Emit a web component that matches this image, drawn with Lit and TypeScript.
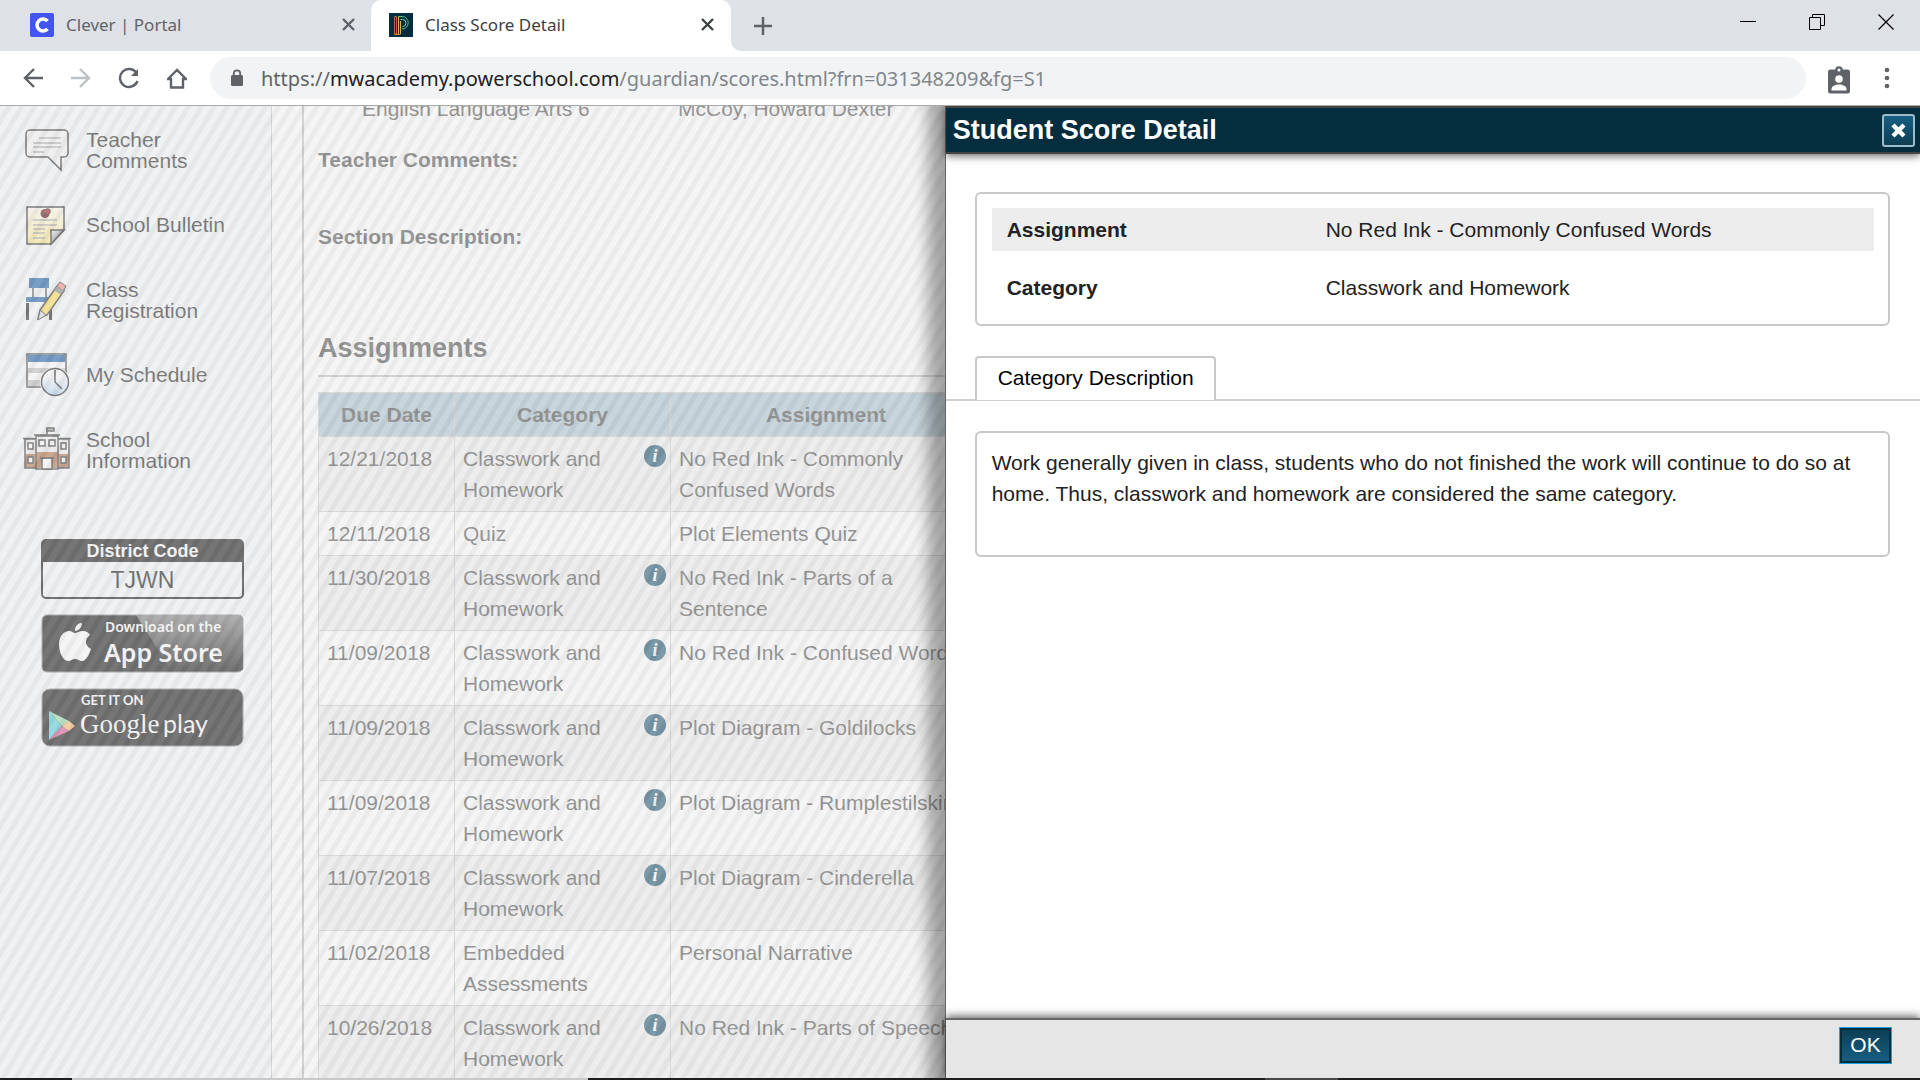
import { LitElement, html, css, svg, nothing } from "lit";
import { customElement, property } from "lit/decorators.js";

type Row = { date: string; category: string; info: boolean; name: string };

const CW = "Classwork and Homework";

const ROWS: Row[] = [
  { date: "12/21/2018", category: CW, info: true, name: "No Red Ink - Commonly Confused Words" },
  { date: "12/11/2018", category: "Quiz", info: false, name: "Plot Elements Quiz" },
  { date: "11/30/2018", category: CW, info: true, name: "No Red Ink - Parts of a Sentence" },
  { date: "11/09/2018", category: CW, info: true, name: "No Red Ink - Confused Words" },
  { date: "11/09/2018", category: CW, info: true, name: "Plot Diagram - Goldilocks" },
  { date: "11/09/2018", category: CW, info: true, name: "Plot Diagram - Rumplestilskin" },
  { date: "11/07/2018", category: CW, info: true, name: "Plot Diagram - Cinderella" },
  { date: "11/02/2018", category: "Embedded Assessments", info: false, name: "Personal Narrative" },
  { date: "10/26/2018", category: CW, info: true, name: "No Red Ink - Parts of Speech" },
];

const ICONS: Record<string, unknown> = {
  comments: svg`
    <path d="M6 3h34a4 4 0 0 1 4 4v19a4 4 0 0 1-4 4h-3v13L24 30H6a4 4 0 0 1-4-4V7a4 4 0 0 1 4-4z" fill="#f6f6f6" stroke="#111" stroke-width="1.5"/>
    <g stroke="#999" stroke-width="1.5"><path d="M15 11h22M9 16h28M9 20h28M9 25h11"/></g>`,
  bulletin: svg`
    <defs><linearGradient id="note" x1="0" y1="0" x2="0" y2="1"><stop offset="0" stop-color="#fffdf0"/><stop offset="1" stop-color="#ffe680"/></linearGradient>
    <linearGradient id="curl" x1="0" y1="0" x2="1" y2="1"><stop offset="0" stop-color="#fff"/><stop offset=".6" stop-color="#666"/></linearGradient></defs>
    <path d="M3 5h37v23L27 42H3z" fill="url(#note)" stroke="#111" stroke-width="1.5"/>
    <path d="M40 28 27 42V28z" fill="url(#curl)" stroke="#111" stroke-width="1.5"/>
    <g stroke="#999" stroke-width="1.5"><path d="M9 18h24M9 23h24M9 27h12M9 31h12M9 36h12"/></g>
    <ellipse cx="21" cy="11.500" rx="4.500" ry="4.500" fill="#400"/><circle cx="23.500" cy="9.500" r="2.800" fill="#b00" stroke="#222"/>`,
  registration: svg`
    <path d="M5 1h20v10H5z" fill="#0652a0"/><path d="M9 11v9M22 11v9" stroke="#222" stroke-width="1.500"/>
    <path d="M2 20h26v5H2z" fill="#0652a0"/><path d="M2 26h3v17H2zM25 30h3v13h-3z" fill="#111"/>
    <path d="m14 42 2-9L33 9l7 5-17 24z" fill="#ffd840" stroke="#222" stroke-width="1.500"/>
    <path d="m33 9 3-4 6 4-2.500 5z" fill="#ff7878" stroke="#222"/><path d="m30 13 3-4 7 5-3 4z" fill="#777"/>
    <path d="m16 33 6 5-8 5z" fill="#ddd" stroke="#222"/>`,
  schedule: svg`
    <defs><linearGradient id="face" x1="0" y1="0" x2="0" y2="1"><stop offset=".3" stop-color="#fff"/><stop offset="1" stop-color="#a8ccf4"/></linearGradient></defs>
    <path d="M3 2h39v33H3z" fill="#fff" stroke="#222" stroke-width="1.500"/>
    <path d="M4 3h37v7H4z" fill="#0652a0"/><path d="M4 16h37v5H4zM4 28h37v6H4z" fill="#bbb"/>
    <circle cx="31" cy="30" r="15" fill="#fff"/>
    <circle cx="31" cy="30" r="13.500" fill="url(#face)" stroke="#111" stroke-width="1.500"/><path d="M31 18v12l7 7" fill="none" stroke="#111" stroke-width="1.500"/>`,
  school: svg`
    <path d="M1 12h44v29H1z" fill="#eee"/><path d="M1 27h12v14H1zM12 25h22v16H12zM34 27h11v14H34z" fill="#a86438"/>
    <g fill="none" stroke="#222" stroke-width="1.500"><path d="M12 9h22v33H12zM1 12h11v29H1zM34 12h11v29H34zM10 8h26M-1 11.500h12M35 11.500h12M23 8V1"/><path d="M23 1h7v3h-7z" fill="#999"/></g>
    <g fill="#fff" stroke="#222" stroke-width="1.500"><path d="M4 16h5v6H4zM15 13h6v6h-6zM25 13h6v6h-6zM37 16h5v6h-5zM4 30h5v6H4zM37 30h5v6h-5zM18 31h10v11H18z"/><path d="M16 31h14"/></g>`,
};

@customElement("browser-chrome")
class BrowserChrome extends LitElement {
  static styles = css`
    :host { display: block; font-family: "Noto Sans", "Open Sans", sans-serif; color: #5f6368; }
    .strip { display: flex; height: 51px; background: #dee1e6; align-items: stretch; }
    .tab { box-sizing: border-box; display: flex; align-items: center; gap: 12px; font-size: 17px; padding: 0 11px 2px 30px; width: 371px; }
    .tab.active { width: 360px; background: #fff; border-radius: 10px 10px 0 0; color: #3c4043; padding: 0 12px 2px 18px; }
    .tab span { flex: 1; }
    .corner { width: 10px; background: #fff; }
    .corner i { display: block; height: 100%; background: #dee1e6; border-bottom-left-radius: 10px; }
    button { display: grid; place-items: center; border: 0; padding: 0; background: none; color: inherit; width: 24px; height: 24px; }
    svg { display: block; }
    .plus { align-self: center; margin-left: 10px; }
    .window { margin-left: auto; display: flex; gap: 45px; padding: 10px 22px 0 0; color: #000; }
    .bar { display: flex; align-items: center; height: 55px; background: #fff; border-bottom: 1px solid #aaa; box-sizing: border-box; padding: 0 21px; gap: 24px; }
    .omni { flex: 1; display: flex; align-items: center; gap: 17px; height: 42px; border-radius: 21px; background: #f1f3f4; padding: 0 20px; margin: 0 -3px; }
    .url { font-size: 20px; color: #80868b; white-space: nowrap; }
    .url b { font-weight: 400; color: #202124; }
    .url i { font-style: normal; color: #5f6368; }
  `;
  render() {
    const x = html`<svg width="13" height="13" viewBox="0 0 13 13" stroke="currentColor" stroke-width="2.400"><path d="m1 1 11 11M12 1 1 12"/></svg>`;
    return html`
      <div class="strip">
        <div class="tab">
          <svg width="24" height="24" viewBox="0 0 24 24"><rect width="24" height="24" rx="2" fill="#4255f2"/><path d="M17.500 8A6 6 0 1 0 17.500 16" fill="none" stroke="#fff" stroke-width="3.500"/></svg>
          <span>Clever | Portal</span><button aria-label="Close tab">${x}</button>
        </div>
        <div class="tab active">
          <svg width="24" height="24" viewBox="0 0 24 24" fill="none"><rect width="24" height="24" fill="#042d3e"/><path d="M5.500 21V3.500h2V21z" stroke="#c75a5a"/><path d="M9.500 21V3.500M11.500 21V8" stroke="#d8b34a"/><path d="M9 3.500h4a6 6 0 0 1 0 12.500" stroke="#58b889"/><path d="M11.500 6.500h2a3.500 3.500 0 0 1 0 7" stroke="#78c8a8"/><path d="M5.500 21.500h6" stroke="#d8843a"/></svg>
          <span>Class Score Detail</span><button aria-label="Close tab">${x}</button>
        </div>
        <div class="corner"><i></i></div>
        <button class="plus" aria-label="New tab"><svg width="18" height="18" viewBox="0 0 18 18" stroke="currentColor" stroke-width="2.500"><path d="M9 0v18M0 9h18"/></svg></button>
        <div class="window">
          <button aria-label="Minimize"><svg width="16" height="16" stroke="currentColor"><path d="M0 7.500h16"/></svg></button>
          <button aria-label="Restore"><svg width="16" height="16" fill="none" stroke="currentColor"><path d="M.5 3.500h11v12H.5zM3.500 3.500v-3h12v11h-4"/></svg></button>
          <button aria-label="Close"><svg width="16" height="16" stroke="currentColor" stroke-width="1.200"><path d="m.5.5 15 15M15.500.5l-15 15"/></svg></button>
        </div>
      </div>
      <div class="bar">
        <button aria-label="Back"><svg width="20" height="20" fill="none" stroke="currentColor" stroke-width="2.400"><path d="M20 10H2M11 1l-9 9 9 9"/></svg></button>
        <button aria-label="Forward"><svg width="20" height="20" fill="none" stroke="#bdc1c6" stroke-width="2.400"><path d="M0 10h18M9 1l9 9-9 9"/></svg></button>
        <button aria-label="Reload"><svg width="22" height="22" fill="none" stroke="currentColor" stroke-width="2.400"><path d="M18.500 6A9 9 0 1 0 19.500 14"/><path d="M20 2v7h-7z" fill="currentColor" stroke="none"/></svg></button>
        <button aria-label="Home"><svg width="20" height="21" fill="none" stroke="currentColor" stroke-width="2.400"><path d="M1 11 10 2l9 9h-3v8.500H4V11z"/></svg></button>
        <div class="omni">
          <svg width="14" height="18" viewBox="0 0 14 18"><rect x="1" y="6" width="12" height="11" rx="1.500" fill="#5f6368"/><path d="M3.800 7V4.500a3.200 3.200 0 0 1 6.400 0V7" fill="none" stroke="#5f6368" stroke-width="1.800"/></svg>
          <div class="url"><i>https://</i><b>mwacademy.powerschool.com</b>/guardian/scores.html?frn=031348209&amp;fg=S1</div>
        </div>
        <button aria-label="Profile"><svg width="24" height="28" viewBox="0 0 24 28"><rect x="1" y="3.500" width="22" height="24" rx="2.500" fill="#5f6368"/><circle cx="12" cy="4" r="3.800" fill="#5f6368"/><circle cx="12" cy="4" r="1.500" fill="#fff"/><circle cx="12" cy="13" r="3.800" fill="#fff"/><path d="M4.500 24.500v-1.500c0-3 4-4.500 7.500-4.500s7.500 1.500 7.500 4.500v1.500z" fill="#fff"/></svg></button>
        <button aria-label="Menu"><svg width="6" height="22" fill="currentColor"><circle cx="3" cy="3" r="2.300"/><circle cx="3" cy="11" r="2.300"/><circle cx="3" cy="19" r="2.300"/></svg></button>
      </div>`;
  }
}

@customElement("side-nav")
class SideNav extends LitElement {
  static styles = css`
    :host { display: block; box-sizing: border-box; width: 272px; background: #f4f8fc; border-right: 1px solid #c0c4c8; padding-top: 6px; }
    a { display: flex; align-items: center; height: 75px; padding-left: 24px; gap: 16px; color: #111; text-decoration: none; font-size: 21px; line-height: 21px; }
    a svg { flex: none; overflow: visible; }
    a span { width: 140px; }
    .promo { display: flex; flex-direction: column; gap: 15px; padding: 52px 27px 0 41px; }
    .code { border: 2px solid #000; border-radius: 5px; text-align: center; height: 56px; }
    .code b { display: block; background: #000; color: #fff; font-size: 18px; line-height: 21px; }
    .code span { font-size: 23px; line-height: 36px; }
    .promo a { display: block; height: auto; padding: 0; }
    .promo svg { display: block; width: 100%; height: 59px; }
  `;
  render() {
    const item = (icon: string, label: string) => html`<a href="#${icon}"><svg width="46" height="46" viewBox="0 0 46 46">${ICONS[icon]}</svg><span>${label}</span></a>`;
    return html`
      <nav>
        ${item("comments", "Teacher Comments")}${item("bulletin", "School Bulletin")}
        ${item("registration", "Class Registration")}${item("schedule", "My Schedule")}${item("school", "School Information")}
      </nav>
      <div class="promo">
        <div class="code"><b>District Code</b><span>TJWN</span></div>
        <a href="#ios"><svg viewBox="0 0 203 59">
          <defs><linearGradient id="sheen" x1="0" y1="0" x2="0" y2="1"><stop offset="0" stop-color="#777"/><stop offset="1" stop-color="#000"/></linearGradient></defs>
          <rect x="1" y="1" width="201" height="57" rx="5" fill="#000" stroke="#777"/>
          <path d="M95 1h102a5 5 0 0 1 5 5v50h-72z" fill="url(#sheen)"/>
          <path d="M41 9c0 5-4 8-7 8 0-5 3-8 7-8zM34 19c2 0 4-2 8-2 3 0 5 1 7 4-6 4-5 11 1 14-2 6-5 12-9 12-3 0-4-2-7-2s-4 2-7 2c-5 0-9-9-9-17 0-8 5-13 10-13 3 0 4 2 6 2z" fill="#fff"/>
          <text x="64" y="18" font-family="Noto Sans, sans-serif" font-weight="600" font-size="14" fill="#fff">Download on the</text>
          <text x="63" y="48" font-family="Noto Sans, sans-serif" font-weight="600" font-size="25" fill="#fff">App Store</text>
        </svg></a>
        <a href="#android"><svg viewBox="0 0 203 59">
          <rect x="1" y="1" width="201" height="57" rx="8" fill="#000" stroke="#777"/>
          <path d="M8 23v29l13-14z" fill="#48c8d8"/><path d="m8 23 20 10-7 5z" fill="#90e0a0"/><path d="m8 52 20-9-7-5z" fill="#d84888"/><path d="m28 33 6 5-6 5-7-5z" fill="#ffb060"/>
          <text x="40" y="17" font-family="Lato, sans-serif" font-weight="700" font-size="13" fill="#fff">GET IT ON</text>
          <text x="39" y="45" font-family="Liberation Serif, serif" font-size="27" fill="#fff">Google</text>
          <text x="122" y="45" font-family="Lato, sans-serif" font-size="25" fill="#fff">play</text>
        </svg></a>
      </div>`;
  }
}

@customElement("assignment-list")
class AssignmentList extends LitElement {
  @property({ attribute: false }) rows: Row[] = [];
  static styles = css`
    :host { display: block; color: #444; font-size: 21px; line-height: 31px; border-left: 2px solid #bcbcbc; padding-left: 14px; }
    .course { display: flex; align-items: flex-end; height: 18px; padding-left: 44px; }
    .course span { flex: 0 0 316px; }
    h3 { font-size: 21px; line-height: 31px; margin: 0; }
    .first { margin: 20px 0 46px; }
    h2 { font-size: 27px; line-height: 36px; margin: 78px 0 15px; padding-bottom: 9px; border-bottom: 2px solid #c0c0c0; }
    table { border-collapse: collapse; table-layout: fixed; width: 663px; }
    th, td { box-sizing: border-box; border: 1px solid #cacaca; padding: 6px 4px 6px 8px; text-align: left; vertical-align: top; }
    th { background: #a6c0ce; text-align: center; padding: 6px; }
    .date { width: 136px; }
    .cat { width: 216px; }
    .name { width: 311px; }
    tbody tr:nth-child(odd) { background: #f0f0f0; }
    .cell { display: flex; justify-content: space-between; }
    .info { flex: none; width: 22px; height: 22px; margin: 2px 0 0; border: 0; padding: 0; border-radius: 50%; background: #0a4664; color: #fff; font: italic bold 18px/22px "Liberation Serif", serif; }
  `;
  render() {
    return html`
      <div class="course"><span>English Language Arts 6</span><span>McCoy, Howard Dexter</span></div>
      <h3 class="first">Teacher Comments:</h3>
      <h3>Section Description:</h3>
      <h2>Assignments</h2>
      <table>
        <thead><tr><th class="date">Due Date</th><th class="cat">Category</th><th class="name">Assignment</th></tr></thead>
        <tbody>${this.rows.map((r) => html`<tr><td>${r.date}</td>
          <td><div class="cell"><span>${r.category}</span>${r.info ? html`<button class="info">i</button>` : nothing}</div></td>
          <td>${r.name}</td></tr>`)}</tbody>
      </table>`;
  }
}

@customElement("score-dialog")
class ScoreDialog extends LitElement {
  static styles = css`
    :host { display: flex; flex-direction: column; box-sizing: border-box; background: #fff; border-left: 1px solid #666; color: #222; font-size: 21px; line-height: 31px; box-shadow: 0 6px 14px 17px rgba(0, 0, 0, 0.33); }
    header { display: flex; justify-content: space-between; align-items: center; height: 44px; background: #042d3e; border: solid #444; border-width: 2px 0; padding: 0 5px 0 7px; box-shadow: 0 2px 8px rgba(0, 0, 0, 0.6); }
    h1 { margin: 0; color: #fff; font-size: 27px; line-height: 40px; }
    .close { box-sizing: border-box; width: 33px; height: 33px; display: grid; place-items: center; padding: 0; border: 2px solid #9cbccb; border-radius: 3px; background: linear-gradient(#176084, #0d3d52); }
    main { flex: 1; padding-top: 38px; }
    .card { border: 2px solid #c8c8c8; border-radius: 6px; margin: 0 30px 0 29px; padding: 14px 14px 14px 15px; }
    .facts { height: 102px; }
    dl { margin: 0; display: grid; gap: 15px; }
    dl div { display: flex; padding: 6px 15px; background: #fff; }
    dl .shade { background: #ededed; }
    dt { width: 319px; font-weight: 700; }
    dd { margin: 0; }
    .tabs { display: flex; margin: 30px 0; padding-left: 29px; border-bottom: 2px solid #d0d0d0; }
    .tab { font: inherit; color: #000; background: #fff; border: 2px solid #c8c8c8; border-bottom: 0; border-radius: 4px 4px 0 0; padding: 3px 20px 7px 21px; margin-bottom: -1px; height: 44px; }
    .desc p { margin: 0 0 32px; }
    footer { display: flex; justify-content: flex-end; align-items: flex-start; height: 60px; box-sizing: border-box; padding: 7px 28px 0 0; background: #e6e6e6; border-top: 2px solid #666; box-shadow: 0 -2px 8px rgba(0, 0, 0, 0.6); }
    .ok { box-sizing: border-box; width: 53px; height: 37px; padding: 0 0 2px; border: 1px solid #1ba1e2; box-shadow: inset 0 0 0 2px #042d3e; background: linear-gradient(#0d3d52, #176084); color: #fff; font: inherit; }
  `;
  render() {
    return html`
      <header><h1>Student Score Detail</h1>
        <button class="close" aria-label="Close"><svg width="15" height="15" stroke="#fff" stroke-width="4.500"><path d="m2 2 11 11M13 2 2 13"/></svg></button></header>
      <main>
        <div class="card facts"><dl>
          <div class="shade"><dt>Assignment</dt><dd>No Red Ink - Commonly Confused Words</dd></div>
          <div><dt>Category</dt><dd>Classwork and Homework</dd></div>
        </dl></div>
        <div class="tabs"><button class="tab">Category Description</button></div>
        <div class="card desc"><p>Work generally given in class, students who do not finished the work will continue to do so at home. Thus, classwork and homework are considered the same category.</p></div>
      </main>
      <footer><button class="ok">OK</button></footer>`;
  }
}

@customElement("app-root")
class AppRoot extends LitElement {
  static styles = css`
    :host { display: flex; flex-direction: column; height: 100vh; overflow: hidden; font-family: "Liberation Sans", Arial, sans-serif; }
    .page { flex: 1; min-height: 0; position: relative; overflow: hidden; display: flex; background: #fff; }
    side-nav { flex: none; margin-right: 30px; }
    assignment-list { flex: 1; }
    .veil { position: absolute; inset: 0; background: repeating-linear-gradient(121deg, rgba(234, 234, 234, 0.5) 0 5px, rgba(214, 214, 214, 0.5) 6px 10px, rgba(234, 234, 234, 0.5) 11px); }
    score-dialog { position: absolute; inset: 0 0 0 auto; width: 50.8%; }
    .taskbar { height: 2px; background: linear-gradient(90deg, #1e1e1e 3.75%, #c8c8c8 3.75% 30.6%, #1e1e1e 30.6% 65.9%, #484848 65.9% 69.7%, #1e1e1e 69.7%); }
  `;
  render() {
    return html`
      <browser-chrome></browser-chrome>
      <div class="page">
        <side-nav></side-nav>
        <assignment-list .rows=${ROWS}></assignment-list>
        <div class="veil"></div>
        <score-dialog></score-dialog>
      </div>
      <div class="taskbar"></div>`;
  }
}
